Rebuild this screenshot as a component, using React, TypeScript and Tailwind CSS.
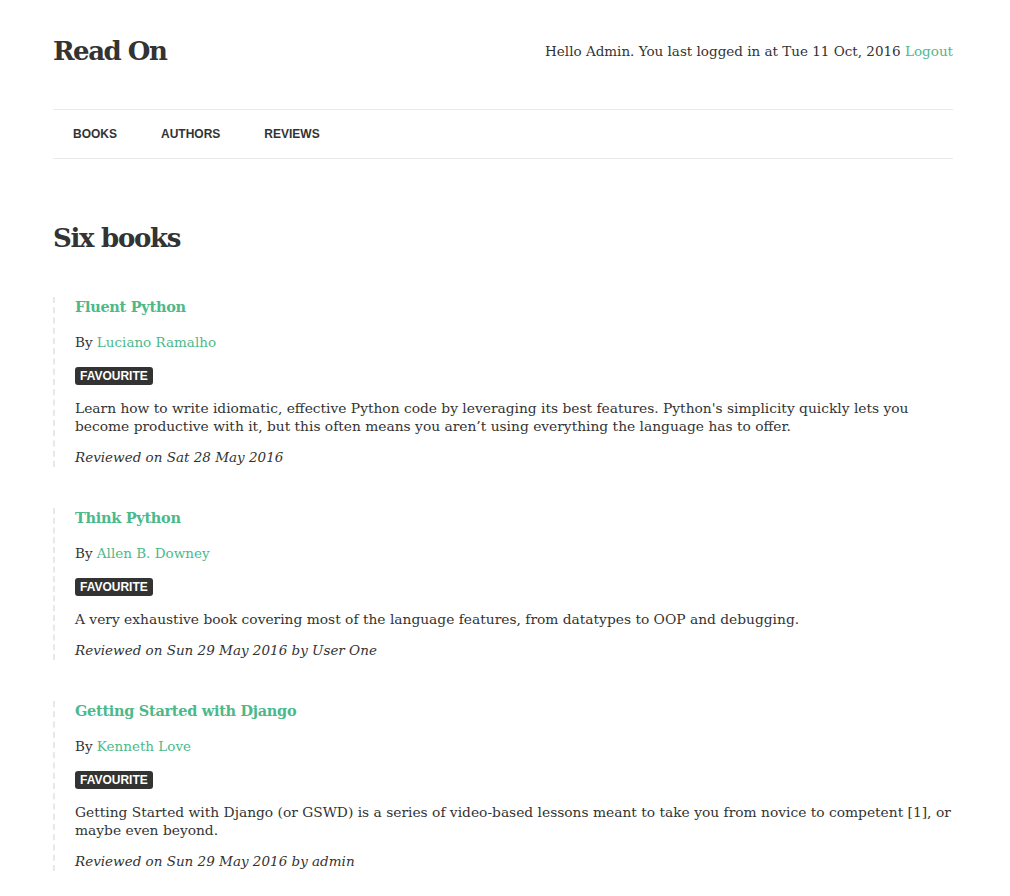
const books = [
  {
    title: "Fluent Python",
    author: "Luciano Ramalho",
    description:
      "Learn how to write idiomatic, effective Python code by leveraging its best features. Python's simplicity quickly lets you become productive with it, but this often means you aren’t using everything the language has to offer.",
    reviewed: "Reviewed on Sat 28 May 2016",
  },
  {
    title: "Think Python",
    author: "Allen B. Downey",
    description:
      "A very exhaustive book covering most of the language features, from datatypes to OOP and debugging.",
    reviewed: "Reviewed on Sun 29 May 2016 by User One",
  },
  {
    title: "Getting Started with Django",
    author: "Kenneth Love",
    description:
      "Getting Started with Django (or GSWD) is a series of video-based lessons meant to take you from novice to competent [1], or maybe even beyond.",
    reviewed: "Reviewed on Sun 29 May 2016 by admin",
  },
];

const heading = "font-['DejaVu_Serif',serif] font-bold";

export default function App() {
  return (
    <div className="min-h-screen bg-white font-['DejaVu_Serif',serif] text-[13.5px] text-[#333]">
      <div className="ml-[53px] w-[900px]">
        {/* Header */}
        <header className="flex items-center justify-between h-[109px] pb-[6px]">
          <h1 className={`${heading} text-[26px] tracking-[-1.5px]`}>Read On</h1>
          <p>
            Hello Admin. You last logged in at Tue 11 Oct, 2016{" "}
            <a href="#" className="text-[#4cb98b]">Logout</a>
          </p>
        </header>

        {/* Nav */}
        <nav className="flex gap-1 border-y border-[#eaeaea] h-[50px] items-center font-['Liberation_Sans',sans-serif] text-[12px] font-bold uppercase text-[#333]">
          <a href="#" className="px-5">Books</a>
          <a href="#" className="px-5">Authors</a>
          <a href="#" className="px-5">Reviews</a>
        </nav>

        {/* Books */}
        <main className="pt-[62px]">
          <h2 className={`${heading} text-[26px] tracking-[-1.3px] leading-[34px]`}>Six books</h2>
          <div className="mt-[42px] flex flex-col gap-[41px]">
            {books.map((b) => (
              <article key={b.title} className="border-l-2 border-dashed border-[#e8e8e8] pl-[20px] flex flex-col">
                <h3 className={`${heading} text-[14.5px] tracking-[-0.3px] leading-[20px] text-[#4cb98b]`}>{b.title}</h3>
                <p className="mt-[15px] leading-[20px]">
                  By <a href="#" className="text-[#4cb98b]">{b.author}</a>
                </p>
                <div className="mt-[15px] flex">
                  <span className="rounded-[3px] bg-[#333] px-[5px] font-['Liberation_Sans',sans-serif] text-[12px] font-bold leading-[18px] text-white">
                    FAVOURITE
                  </span>
                </div>
                <p className="mt-[14px] text-[13.8px] leading-[18px]">{b.description}</p>
                <p className="mt-[12px] leading-[20px] italic">{b.reviewed}</p>
              </article>
            ))}
          </div>
        </main>
      </div>
    </div>
  );
}
